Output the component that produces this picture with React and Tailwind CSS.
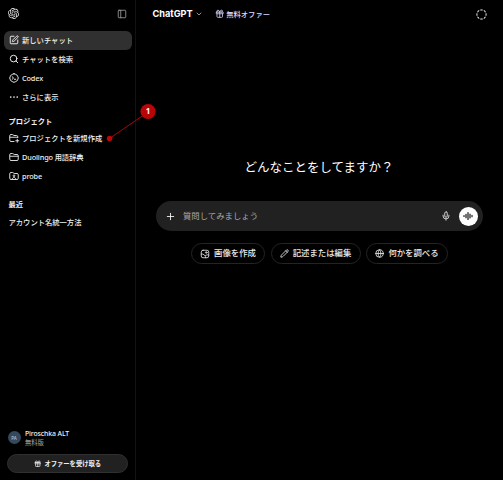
import { SiOpenai } from 'react-icons/si';
import {
  ChevronDown,
  CircleDashed,
  Gift,
  Globe,
  Mic,
  PanelLeft,
  Pencil,
  Plus,
  Search,
  SquarePen,
} from 'lucide-react';

const CodexIcon = () => (
  <svg viewBox="0 0 20 20" className="size-[10px]" fill="none" stroke="currentColor" strokeWidth="1.9" strokeLinecap="round" strokeLinejoin="round">
    <path d="M10 1.5c1.6 0 2.6.8 3.5 1.4 1.5.4 3 1.3 3.5 3 .2 1.2 1.5 2.3 1.5 4.1s-1.3 2.9-1.5 4.1c-.5 1.7-2 2.6-3.5 3-.9.6-1.9 1.4-3.5 1.4s-2.6-.8-3.5-1.4c-1.5-.4-3-1.3-3.5-3-.2-1.2-1.5-2.3-1.5-4.100s1.300-2.900 1.500-4.100c.5-1.700 2-2.600 3.500-3 .9-.6 1.900-1.400 3.500-1.400z" />
    <path d="M7 7.500l1.600 2.500L7 12.500M10.800 12.500h2.700" />
  </svg>
);

const DotsIcon = () => (
  <svg viewBox="0 0 20 20" className="size-[10px]" fill="currentColor">
    <circle cx="3.500" cy="10" r="1.700" />
    <circle cx="10" cy="10" r="1.700" />
    <circle cx="16.500" cy="10" r="1.700" />
  </svg>
);

const NewProjectIcon = () => (
  <svg viewBox="0 0 22 20" className="h-[10px] w-[11px]" fill="none" stroke="currentColor" strokeWidth="1.800" strokeLinecap="round" strokeLinejoin="round">
    <path d="M10 17H4A2.500 2.500 0 0 1 1.500 14.500v-9A2.500 2.500 0 0 1 4 3H6.500c1.500 0 2 2 3.500 2h5A2.500 2.500 0 0 1 17.500 7.500V9M2 8.500h15.500M16.500 12.500v6M13.500 15.500h6" />
  </svg>
);

const FolderIcon = () => (
  <svg viewBox="0 0 20 20" className="size-[10px]" fill="none" stroke="currentColor" strokeWidth="1.800" strokeLinejoin="round">
    <path d="M1.500 5.500A2.500 2.500 0 0 1 4 3h3c1.500 0 2 2 3.500 2H16a2.500 2.500 0 0 1 2.500 2.500v7A2.500 2.500 0 0 1 16 17H4a2.500 2.500 0 0 1-2.500-2.500zM1.500 8.500h17" />
  </svg>
);

const SharedFolderIcon = () => (
  <svg viewBox="0 0 20 20" className="size-[10px]" fill="none" stroke="currentColor" strokeWidth="1.800" strokeLinejoin="round">
    <path d="M1.500 5.500A2.500 2.500 0 0 1 4 3h3c1.500 0 2 2 3.500 2H16a2.500 2.500 0 0 1 2.500 2.500v7A2.500 2.500 0 0 1 16 17H4a2.500 2.500 0 0 1-2.500-2.500z" />
    <circle cx="10" cy="9.500" r="1.700" />
    <path d="M6.500 16.500c.3-4.500 6.700-4.500 7 0" />
  </svg>
);

const ImageIcon = () => (
  <svg viewBox="0 0 20 20" className="size-[10px]" fill="none" stroke="currentColor" strokeWidth="1.600" strokeLinecap="round" strokeLinejoin="round">
    <rect x="2.500" y="2.500" width="15" height="15" rx="3.500" />
    <circle cx="12.500" cy="7" r="1.600" />
    <path d="M2.500 10c5-.5 8.500 2.500 9 7.500M11 13c2-1.500 4-1.700 6.500-1" />
  </svg>
);

const VoiceIcon = () => (
  <svg viewBox="0 0 10 10" className="size-[10px]" fill="none" stroke="currentColor" strokeWidth="1.100" strokeLinecap="round">
    <path d="M1 4.600v.8M3 3.200v3.600M5 1.500v7M7 3v4M9 4.300v1.400" />
  </svg>
);

const menu = [
  { label: '新しいチャット', icon: <SquarePen className="size-[10px]" strokeWidth={2.3} />, active: true },
  { label: 'チャットを検索', icon: <Search className="size-[10px]" strokeWidth={2.3} /> },
  { label: 'Codex', icon: <CodexIcon />, latin: true },
  { label: 'さらに表示', icon: <DotsIcon /> },
];

const projects = [
  { label: 'プロジェクトを新規作成', icon: <NewProjectIcon /> },
  { label: 'Duolingo 用語辞典', icon: <FolderIcon />, latin: true },
  { label: 'probe', icon: <SharedFolderIcon />, latin: true },
];

const suggestions = [
  { label: '画像を作成', icon: <ImageIcon />, width: 'w-[74px]' },
  { label: '記述または編集', icon: <Pencil className="size-[9px]" strokeWidth={2.2} />, width: 'w-[90px]' },
  { label: '何かを調べる', icon: <Globe className="size-[9px]" strokeWidth={2.2} />, width: 'w-[82px]' },
];

const Item = ({ label, icon, active, latin }) => (
  <button className={`flex h-[18.800px] w-full items-center rounded-[6px] pl-[5px] text-left ${active ? 'bg-[#303030]' : ''}`}>
    <span className="flex w-[13.500px] shrink-0 items-center">{icon}</span>
    <span className={`whitespace-nowrap ${latin ? 'tracking-[-0.12px]' : ''}`}>{label}</span>
  </button>
);

const Sidebar = () => (
  <aside className="flex w-[136px] shrink-0 flex-col border-r border-[#121212] px-[3.500px] text-[7.300px] leading-[10px] font-medium text-[#f0f0f0]">
    <div className="flex h-[31px] items-center justify-between pr-[5px] pb-[4px] pl-[4.500px]">
      <SiOpenai className="size-[11px]" />
      <PanelLeft className="size-[10px] text-[#a0a0a0]" strokeWidth={2} />
    </div>
    <nav>
      {menu.map((item) => (
        <Item key={item.label} {...item} />
      ))}
    </nav>
    <h2 className="mt-[9.500px] mb-[3.300px] pl-[5px] font-bold">プロジェクト</h2>
    <nav>
      {projects.map((item) => (
        <Item key={item.label} {...item} />
      ))}
    </nav>
    <h2 className="mt-[14px] pl-[5px] font-bold">最近</h2>
    <p className="mt-[8px] pl-[5px]">アカウント名統一方法</p>

    <div className="mt-auto flex items-center gap-[4.500px] pl-[4px]">
      <span className="flex size-[13px] items-center justify-center rounded-full bg-[#34485e] text-[4.500px] text-[#b8c4d2]">PA</span>
      <div className="pt-[1px] leading-[9.500px]">
        <p className="text-[6.900px] tracking-[-0.120px]">Piroschka ALT</p>
        <p className="text-[6.300px] font-normal text-[#a8a8a8]">無料版</p>
      </div>
    </div>
    <button className="mx-[3.500px] mt-[6.500px] mb-[7px] flex h-[19px] items-center justify-center gap-[3px] rounded-full border border-[#303030] bg-[#212121] text-[6.300px] font-bold">
      <Gift className="size-[7.500px]" strokeWidth={2.3} />
      オファーを受け取る
    </button>
  </aside>
);

// Numbered marker pointing at the "new project" entry
const Callout = () => (
  <svg className="absolute top-[100px] left-[100px]" width="60" height="45" viewBox="0 0 60 45">
    <path d="M9.500 38.500L48 12" stroke="#a3090b" strokeWidth="1" />
    <circle cx="9.500" cy="38.500" r="2.700" fill="#b5090c" />
    <circle cx="48" cy="11.500" r="7.600" fill="#b90508" />
    <text x="48" y="14.300" textAnchor="middle" fontSize="8" fontWeight="700" fill="#fff">1</text>
  </svg>
);

const App = () => {
  return (
    <div className="relative flex h-[480px] w-[503px] overflow-hidden bg-black font-['Noto_Sans','Noto_Sans_CJK_JP',sans-serif] text-white">
      <Sidebar />
      <main className="flex min-w-0 flex-1 flex-col">
        <header className="flex h-[28px] items-center pr-[16px] pl-[16.500px]">
          <span className="font-['Inter',sans-serif] text-[9.200px] font-bold">ChatGPT</span>
          <ChevronDown className="ml-[2px] size-[8px] text-[#b8b8b8]" strokeWidth={2.4} />
          <span className="ml-[12px] flex items-center gap-[2px] text-[7.300px] font-medium text-[#dcdaff]">
            <Gift className="size-[9.500px]" strokeWidth={2} />
            無料オファー
          </span>
          <CircleDashed className="ml-auto size-[11px] text-[#e8e8e8]" strokeWidth={2.2} />
        </header>

        <h1 className="mt-[130px] h-[20px] pr-[1px] text-center text-[12.500px] leading-[20px]">どんなことをしてますか？</h1>

        <div className="mt-[23px] mr-[20px] ml-[20px] flex h-[30px] items-center rounded-full bg-[#212121] pr-[5.500px] pl-[9px]">
          <Plus className="size-[11px] text-[#eeeeee]" strokeWidth={2} />
          <span className="ml-[7px] text-[8.400px] text-[#a9a9a9]">質問してみましょう</span>
          <Mic className="ml-auto size-[10px] text-[#dddddd]" strokeWidth={2.2} />
          <button className="ml-[8px] flex size-[19px] items-center justify-center rounded-full bg-white text-black">
            <VoiceIcon />
          </button>
        </div>

        <div className="mt-[12px] flex justify-center gap-[5.500px] text-[8.400px] font-medium text-[#ececec]">
          {suggestions.map(({ label, icon, width }) => (
            <button key={label} className={`flex h-[21px] shrink-0 items-center justify-center gap-[4px] rounded-full border border-[#242424] whitespace-nowrap ${width}`}>
              {icon}
              {label}
            </button>
          ))}
        </div>
      </main>
      <Callout />
    </div>
  );
};

export default App;
